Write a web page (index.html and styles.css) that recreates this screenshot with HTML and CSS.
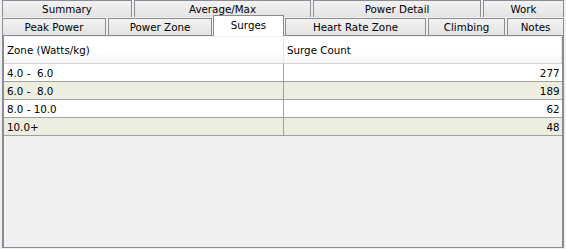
FILE: index.html
```html
<!DOCTYPE html>
<html lang="en">
<head>
<meta charset="UTF-8">
<title>Surges</title>
<link rel="stylesheet" href="styles.css">
</head>
<body>
  <div class="tabs">
    <div class="tab-row">
      <div class="tab w-summary">Summary</div>
      <div class="tab w-avg">Average/Max</div>
      <div class="tab w-detail">Power Detail</div>
      <div class="tab w-work">Work</div>
    </div>
    <div class="tab-row">
      <div class="tab w-peak">Peak Power</div>
      <div class="tab w-zone">Power Zone</div>
      <div class="tab active w-surges">Surges</div>
      <div class="tab w-hr">Heart Rate Zone</div>
      <div class="tab w-climb">Climbing</div>
      <div class="tab w-notes">Notes</div>
    </div>
  </div>
  <div class="panel">
    <table class="grid">
      <thead>
        <tr>
          <th class="col-zone">Zone (Watts/kg)</th>
          <th>Surge Count</th>
        </tr>
      </thead>
      <tbody>
        <tr><td>4.0 -&nbsp; 6.0</td><td class="num">277</td></tr>
        <tr class="alt"><td>6.0 -&nbsp; 8.0</td><td class="num">189</td></tr>
        <tr><td>8.0 - 10.0</td><td class="num">62</td></tr>
        <tr class="alt"><td>10.0+</td><td class="num">48</td></tr>
      </tbody>
    </table>
  </div>
</body>
</html>
```

FILE: styles.css
```css
body {
  margin: 0;
  background-color: #f0f0f0;
  font-family: Tahoma, "DejaVu Sans", sans-serif;
  font-size: 10.3px;
  color: #000000;
  width: 566px;
  height: 249px;
  overflow: hidden;
}
.tabs {
  padding: 0 2px 0 2px;
  height: 35px;
}
.tab-row {
  display: flex;
  gap: 2px;
  height: 17px;
  margin-bottom: 1px;
}
.tab {
  box-sizing: border-box;
  height: 17px;
  border: 1px solid #898c95;
  border-bottom: none;
  background: linear-gradient(#f2f2f2, #e3e3e3);
  text-align: center;
  line-height: 16px;
  white-space: nowrap;
}
.tab.active {
  position: relative;
  top: -3px;
  height: 21px;
  margin: 0 -1px;
  background: #ffffff;
  line-height: 18px;
  z-index: 2;
}
.w-summary { width: 130px; }
.w-avg { width: 177px; }
.w-detail { width: 168px; }
.w-work { flex: 1; }
.w-peak { width: 104px; }
.w-zone { width: 104px; }
.w-surges { width: 71px; }
.w-hr { width: 141px; }
.w-climb { width: 77px; }
.w-notes { flex: 1; }
.panel {
  box-sizing: border-box;
  margin: 0 2px;
  height: 213px;
  border: 1px solid #898c95;
  border-left: 2px solid #898c95;
  border-right: 2px solid #898c95;
  background-color: #f0f0f0;
  padding: 1px 0 0 0;
}
.grid {
  width: 100%;
  border-collapse: collapse;
  table-layout: fixed;
}
.grid th {
  height: 26px;
  padding: 0 0 0 3px;
  text-align: left;
  font-weight: normal;
  background: linear-gradient(#ffffff 60%, #f4f5f6);
  border-right: 1px solid #e4e5e8;
  border-bottom: 1px solid #d5d5d5;
}
.col-zone {
  width: 276px;
}
.grid td {
  height: 17px;
  padding: 0 2px 0 3px;
  border-bottom: 1px solid #a0a0a0;
  background-color: #ffffff;
}
.grid td + td {
  border-left: 1px solid #a0a0a0;
}
.grid tr.alt td {
  background-color: #eeeee0;
}
.grid td.num {
  text-align: right;
}
```
